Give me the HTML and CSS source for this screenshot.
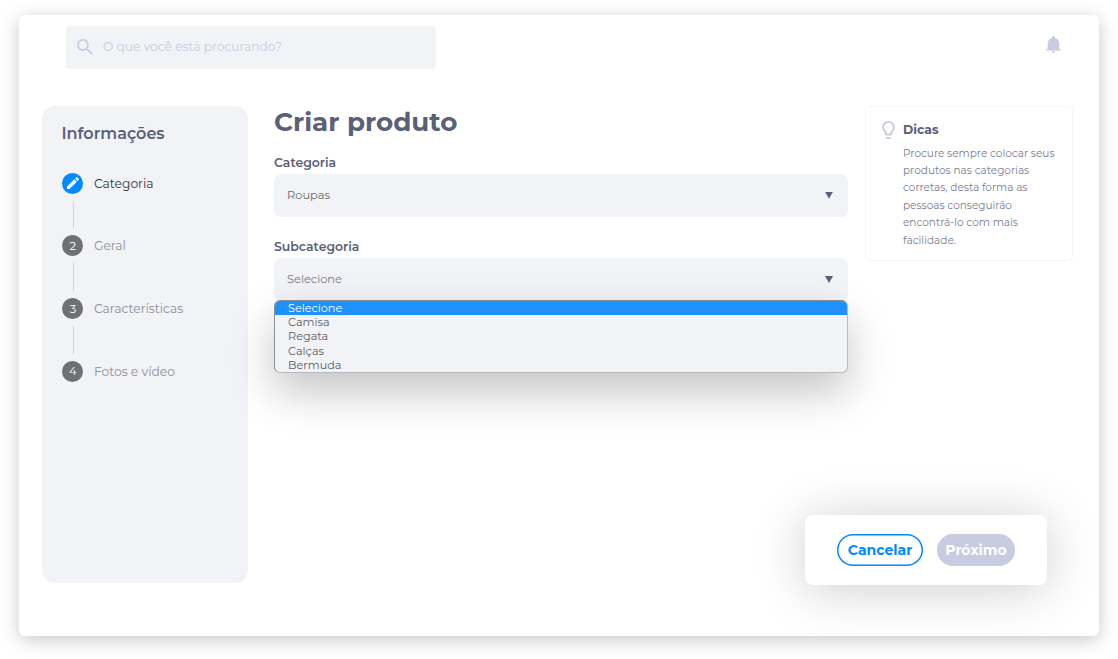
FILE: index.html
```html
<!DOCTYPE html>
<html lang="pt-BR">
<head>
<meta charset="utf-8">
<title>Criar produto</title>
<link rel="stylesheet" href="styles.css">
</head>
<body>
<div class="window">
  <header class="topbar">
    <div class="search">
      <svg class="search-icon" viewBox="3 3 17.5 17.5"><path d="M15.5 14h-.79l-.28-.27A6.47 6.47 0 0 0 16 9.5 6.5 6.5 0 1 0 9.5 16c1.61 0 3.09-.59 4.23-1.57l.27.28v.79l5 4.99L20.49 19zm-6 0C7.01 14 5 11.99 5 9.5S7.01 5 9.5 5 14 7.01 14 9.5 11.99 14 9.5 14z"/></svg>
      <span class="search-text">O que você está procurando?</span>
    </div>
    <svg class="bell" viewBox="3 2 18 20" preserveAspectRatio="none"><path d="M12 22c1.1 0 2-.9 2-2h-4c0 1.1.9 2 2 2zm7-5v-6c0-3.300-2-6-5.200-6.700V3.500c0-.83-.97-1.500-1.800-1.500s-1.800.67-1.800 1.500v.8C7 5 5 7.700 5 11v6l-2 1.300V19h18v-.7z"/></svg>
  </header>
  <div class="content">
    <aside class="sidebar">
      <h2 class="sidebar-title">Informações</h2>
      <div class="step active">
        <span class="dot"><svg class="pencil" viewBox="3 3 18 18"><path d="M3 17.250V21h3.750L17.810 9.940l-3.750-3.750zM20.710 7.040a1 1 0 0 0 0-1.410l-2.340-2.340a1 1 0 0 0-1.410 0l-1.830 1.830 3.750 3.750z"/></svg></span>
        <span class="label">Categoria</span>
      </div>
      <div class="line"></div>
      <div class="step"><span class="dot">2</span><span class="label">Geral</span></div>
      <div class="line"></div>
      <div class="step"><span class="dot">3</span><span class="label">Características</span></div>
      <div class="line"></div>
      <div class="step"><span class="dot">4</span><span class="label">Fotos e vídeo</span></div>
    </aside>
    <main class="form">
      <h1 class="title">Criar produto</h1>
      <div class="field">
        <div class="field-label">Categoria</div>
        <div class="select"><span class="value">Roupas</span><i class="arrow"></i></div>
      </div>
      <div class="field">
        <div class="field-label">Subcategoria</div>
        <div class="select"><span class="value muted">Selecione</span><i class="arrow"></i>
          <div class="menu">
            <div class="option selected">Selecione</div>
            <div class="option">Camisa</div>
            <div class="option">Regata</div>
            <div class="option">Calças</div>
            <div class="option">Bermuda</div>
          </div>
        </div>
      </div>
    </main>
    <aside class="tips">
      <svg class="bulb" viewBox="5 2 14 20"><path d="M9 21c0 .55.450 1 1 1h4c.55 0 1-.450 1-1v-1H9zm3-19C8.140 2 5 5.140 5 9c0 2.380 1.190 4.470 3 5.740V17c0 .55.450 1 1 1h6c.55 0 1-.450 1-1v-2.260c1.810-1.270 3-3.360 3-5.740 0-3.860-3.140-7-7-7zm2.850 11.100l-.85.6V16h-4v-2.300l-.85-.6A4.997 4.997 0 0 1 7 9c0-2.760 2.240-5 5-5s5 2.240 5 5c0 1.630-.8 3.160-2.150 4.100z"/></svg>
      <div class="tips-body">
        <h3 class="tips-title">Dicas</h3>
        <p class="tips-text">Procure sempre colocar seus<br>produtos nas categorias<br>corretas, desta forma as<br>pessoas conseguirão<br>encontrá-lo com mais<br>facilidade.</p>
      </div>
    </aside>
  </div>
  <div class="actions">
    <button class="btn cancel">Cancelar</button>
    <button class="btn next">Próximo</button>
  </div>
</div>
</body>
</html>
```
FILE: styles.css
```css
* { box-sizing: border-box; }
body {
  margin: 0;
  min-height: 659px;
  padding: 15px 19px 0;
  background: #fff;
  font-family: Montserrat, Inter, "Liberation Sans", sans-serif;
  color: #5b6079;
}
h1, h2, h3, p { margin: 0; }
.window {
  position: relative;
  width: 1080px;
  height: 621px;
  padding-top: 11px;
  border-radius: 6px;
  background: #fff;
  box-shadow: 0 4px 18px rgba(0, 0, 0, .22);
}
.topbar {
  display: flex;
  justify-content: space-between;
  padding: 0 38px 0 47px;
}
.search {
  display: flex;
  align-items: center;
  gap: 10px;
  width: 370px;
  height: 43px;
  padding: 0 0 2px 11px;
  border-radius: 4px;
  background: #f2f3f7;
}
.search-icon { width: 16px; height: 16px; fill: #c9cce0; }
.search-text { font-size: 12.250px; color: #c9cce0; }
.bell { width: 15px; height: 17px; margin-top: 10px; fill: #c9cce0; }
.content {
  display: grid;
  grid-template-columns: 206px 574px 208px;
  align-items: start;
  margin: 37px 0 0 23px;
}
.sidebar {
  height: 477px;
  padding: 18px 0 0 19.500px;
  border-radius: 13px;
  background: #f2f3f7;
}
.sidebar-title { height: 48.500px; font-size: 16px; line-height: 20px; font-weight: 600; }
.step { display: flex; align-items: center; gap: 10.500px; height: 21px; padding-left: .9px; }
.dot {
  display: flex;
  align-items: center;
  justify-content: center;
  width: 21px;
  height: 21px;
  border-radius: 50%;
  background: #6f7072;
  color: #fff;
  font-size: 11.500px;
}
.active .dot { background: #0289ff; }
.pencil { width: 12px; height: 12px; fill: #fff; }
.label { font-size: 12.300px; line-height: 21px; color: #8e9094; }
.active .label { color: #333539; }
.line { width: 1px; height: 27.800px; margin: 7px 0 7px 11.500px; background: #d2d3d8; }
.form { margin-left: 26px; width: 574px; }
.title { height: 49.500px; font-size: 26.200px; line-height: 32px; font-weight: 700; }
.field { height: 84.300px; }
.field-label { height: 18px; font-size: 12.450px; line-height: 14px; font-weight: 600; }
.select {
  position: relative;
  display: flex;
  align-items: center;
  justify-content: space-between;
  height: 43.500px;
  padding: 0 15px 0 13px;
  border-radius: 7px;
  background: #f2f3f7;
}
.value { font-size: 11.400px; line-height: 15px; color: #66686e; }
.muted { color: #797b81; }
.arrow { width: 8px; height: 7px; background: #5b6079; clip-path: polygon(0 0, 100% 0, 50% 100%); }
.menu {
  position: absolute;
  top: 42.500px;
  left: 0;
  width: 574px;
  height: 73px;
  overflow: hidden;
  border: 1px solid #b8b9bd;
  border-top-color: #8a8d94;
  border-left-color: #8f9094;
  border-radius: 6px;
  background: #f2f3f7;
  box-shadow: 0 19px 44px rgba(0, 0, 0, .23);
}
.option { height: 14.100px; padding-left: 13px; font-size: 11.250px; line-height: 14px; color: #5b5d63; }
.selected { background: #1e90ff; color: #fff; }
.tips {
  display: flex;
  gap: 8px;
  width: 208px;
  height: 155px;
  margin-left: 43px;
  padding: 13.500px 0 0 16px;
  border: 1px solid #f5f5f8;
  border-radius: 5px;
}
.bulb { flex: none; width: 13px; height: 18px; fill: #c9cce0; }
.tips-title { height: 24px; font-size: 12.400px; line-height: 17px; font-weight: 700; }
.tips-text { font-size: 10.500px; line-height: 17.400px; color: #777c92; white-space: nowrap; }
.actions {
  position: absolute;
  left: 786px;
  top: 500px;
  display: flex;
  align-items: center;
  justify-content: center;
  gap: 14px;
  width: 242px;
  height: 70px;
  padding-right: 1px;
  border-radius: 8px;
  background: #fff;
  box-shadow: 0 4px 52px rgba(0, 0, 0, .2);
}
.btn {
  height: 32px;
  padding: 0;
  border: 0;
  border-radius: 16px;
  font: 700 14px/30px Montserrat, Inter, sans-serif;
}
.cancel { width: 86px; padding-left: 1px; background: #fff; box-shadow: inset 0 0 0 1.500px #0289ff; color: #0289ff; }
.next { width: 78px; padding-left: 1px; background: #c9cce0; color: #fff; }
```
